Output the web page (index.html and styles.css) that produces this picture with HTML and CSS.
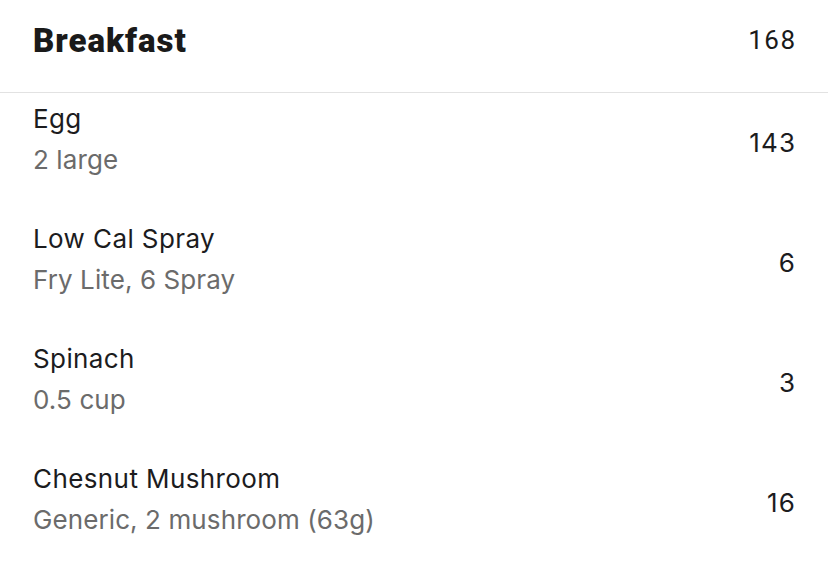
FILE: index.html
```html
<!DOCTYPE html>
<html>
<head>
<meta charset="utf-8">
<link rel="stylesheet" href="styles.css">
</head>
<body>
<div class="meal">
  <div class="meal-header">
    <span class="meal-title">Breakfast</span>
    <span class="meal-total">168</span>
  </div>
  <div class="entry">
    <div class="entry-text">
      <div class="entry-name">Egg</div>
      <div class="entry-detail">2 large</div>
    </div>
    <div class="entry-cal">143</div>
  </div>
  <div class="entry">
    <div class="entry-text">
      <div class="entry-name">Low Cal Spray</div>
      <div class="entry-detail">Fry Lite, 6 Spray</div>
    </div>
    <div class="entry-cal">6</div>
  </div>
  <div class="entry">
    <div class="entry-text">
      <div class="entry-name">Spinach</div>
      <div class="entry-detail">0.5 cup</div>
    </div>
    <div class="entry-cal">3</div>
  </div>
  <div class="entry">
    <div class="entry-text">
      <div class="entry-name">Chesnut Mushroom</div>
      <div class="entry-detail">Generic, 2 mushroom (63g)</div>
    </div>
    <div class="entry-cal">16</div>
  </div>
</div>
</body>
</html>
```
FILE: styles.css
```css
html, body {
  margin: 0;
  padding: 0;
  background: #ffffff;
}
body {
  width: 828px;
  height: 574px;
  overflow: hidden;
  font-family: Inter, "Noto Sans", sans-serif;
  color: #1c1c1e;
}
.meal-header {
  display: flex;
  justify-content: space-between;
  align-items: center;
  height: 92px;
  padding: 0 33px;
  border-bottom: 1px solid #e2e2e2;
  font-family: Roboto, "Liberation Sans", sans-serif;
}
.meal-title {
  font-size: 33px;
  font-weight: 900;
  letter-spacing: 1px;
  color: #1a1a1a;
  margin-top: -12px;
}
.meal-total {
  font-size: 26px;
  letter-spacing: 1.5px;
  margin-right: -1.5px;
  color: #1a1a1a;
  margin-top: -12px;
}
.entry {
  display: flex;
  justify-content: space-between;
  align-items: center;
  height: 120px;
  padding: 8px 33px 36px;
  box-sizing: border-box;
}
.entry-name {
  font-size: 26px;
  line-height: 41px;
  letter-spacing: 0.4px;
  color: #1c1c1e;
}
.entry-detail {
  font-size: 26px;
  line-height: 41px;
  letter-spacing: 0.1px;
  color: #6b6b6b;
}
.entry-cal {
  font-size: 26px;
  letter-spacing: 1.2px;
  margin-right: -1.2px;
  margin-top: 6px;
  color: #1c1c1e;
}
```
